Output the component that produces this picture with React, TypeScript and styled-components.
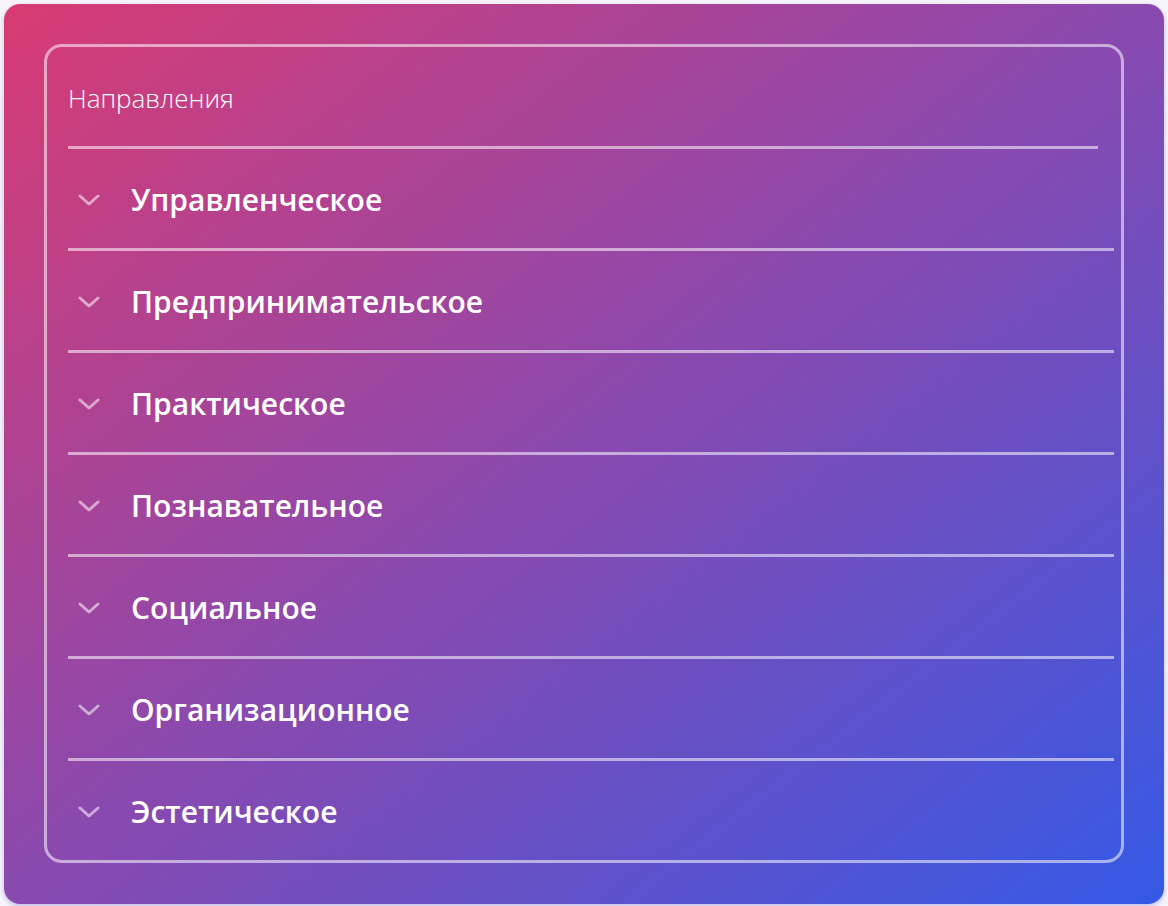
import styled, { createGlobalStyle } from 'styled-components';

const GlobalStyle = createGlobalStyle`
  html, body {
    margin: 0;
    padding: 0;
    background: #f7f5fb;
  }
  body {
    font-family: "Open Sans", "Noto Sans", sans-serif;
  }
`;

const Page = styled.div`
  padding: 4px;
`;

const Card = styled.section`
  box-sizing: border-box;
  width: 1160px;
  height: 900px;
  padding: 40px;
  border-radius: 16px;
  background: linear-gradient(to bottom right, #d93b73 0%, #8c49ad 48%, #3459e6 100%);
  box-shadow: 0 2px 5px rgba(90, 70, 200, 0.35);
`;

const Panel = styled.div`
  box-sizing: border-box;
  height: 819px;
  border: 3px solid rgba(255, 255, 255, 0.55);
  border-radius: 18px;
  padding: 0 7px 0 21px;
  display: flex;
  flex-direction: column;
`;

const Header = styled.div`
  height: 101px;
  margin-right: 16px;
  border-bottom: 3px solid rgba(255, 255, 255, 0.55);
  display: flex;
  align-items: flex-start;
`;

const Title = styled.h2`
  margin: 33px 0 0;
  font-size: 26px;
  font-weight: 300;
  line-height: 36px;
  color: #fff;
`;

const List = styled.ul`
  list-style: none;
  margin: 0;
  padding: 0;
`;

const Item = styled.li<{ $last?: boolean }>`
  height: 99px;
  display: flex;
  align-items: center;
  gap: 31px;
  padding-left: 10px;
  border-bottom: ${(p) => (p.$last ? 'none' : '3px solid rgba(255, 255, 255, 0.55)')};
`;

const Chevron = styled.svg`
  width: 22px;
  height: 12px;
  flex-shrink: 0;
  margin-top: 3px;
`;

const Label = styled.span`
  font-size: 30px;
  font-weight: 600;
  color: #fff;
  line-height: 30px;
  margin-top: 2px;
`;

const items = [
  'Управленческое',
  'Предпринимательское',
  'Практическое',
  'Познавательное',
  'Социальное',
  'Организационное',
  'Эстетическое',
];

export default function App() {
  return (
    <>
      <GlobalStyle />
      <Page>
        <Card>
          <Panel>
            <Header>
              <Title>Направления</Title>
            </Header>
            <List>
              {items.map((name, i) => (
                <Item key={name} $last={i === items.length - 1}>
                  <Chevron viewBox="0 0 22 12" fill="none">
                    <path
                      d="M2 2l9 8 9-8"
                      stroke="rgba(255,255,255,0.55)"
                      strokeWidth="3"
                      strokeLinecap="round"
                      strokeLinejoin="round"
                    />
                  </Chevron>
                  <Label>{name}</Label>
                </Item>
              ))}
            </List>
          </Panel>
        </Card>
      </Page>
    </>
  );
}
